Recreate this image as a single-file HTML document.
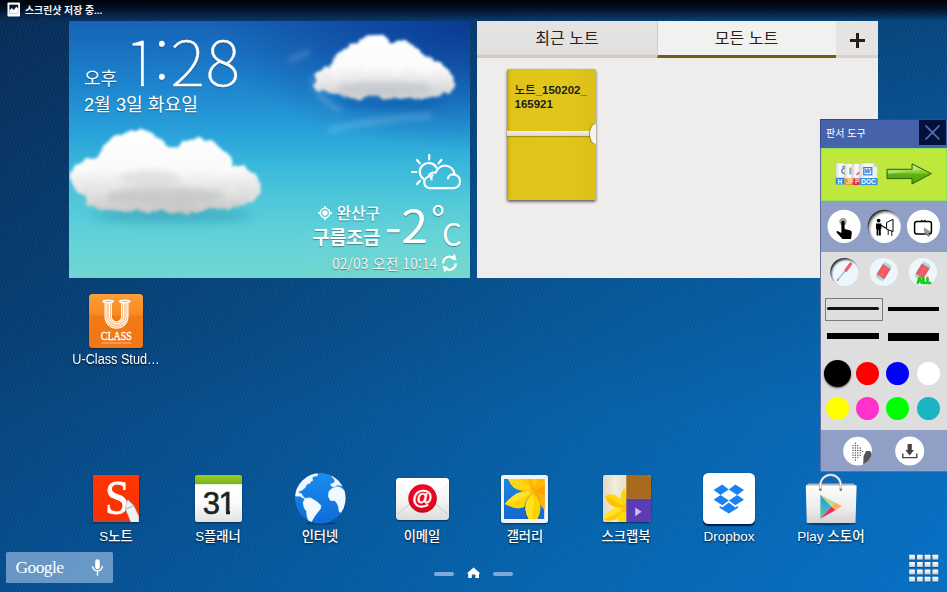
<!DOCTYPE html>
<html lang="ko"><head><meta charset="utf-8"><title>Home</title>
<style>
html,body{margin:0;padding:0;}
body{width:947px;height:592px;overflow:hidden;position:relative;font-family:"Liberation Sans","Noto Sans CJK KR",sans-serif;background:#0a549a;}
.abs{position:absolute;}
#bg{left:0;top:0;width:947px;height:592px;background:
 linear-gradient(180deg,#00030a 0px,#020f22 8px,rgba(6,32,66,0.75) 15px,rgba(8,50,100,0) 21px),
 repeating-linear-gradient(105deg,rgba(255,255,255,0.028) 0px,rgba(255,255,255,0.028) 1.4px,rgba(0,0,0,0) 1.4px,rgba(0,0,0,0) 3.3px),
 linear-gradient(180deg,rgba(6,22,52,0.44) 0%,rgba(6,22,52,0.2) 30%,rgba(6,22,52,0) 70%),
 linear-gradient(180deg,rgba(0,130,240,0) 55%,rgba(0,130,240,0.16) 100%),
 linear-gradient(105deg,#063b70 0%,#054b87 30%,#055da1 62%,#056bbc 100%);}
#status{left:0;top:0;width:947px;height:20px;color:#fff;font-size:10px;font-weight:bold;}
.lbl{position:absolute;color:#fff;font-size:13.3px;line-height:18px;text-align:center;white-space:nowrap;text-shadow:0 1px 2px rgba(0,0,0,0.8);}
.wt{color:#fff;white-space:nowrap;text-shadow:0 1px 1px rgba(0,0,0,0.35);}
.tab{top:0;height:34px;line-height:36px;text-align:center;font-size:16px;color:#2e221c;white-space:nowrap;}
.dot{width:23.2px;height:23.2px;border-radius:50%;}
</style></head><body>
<div id="bg" class="abs"></div>
<div id="status" class="abs">
<svg class="abs" style="left:6.5px;top:1.8px" width="13.6" height="15" viewBox="0 0 14 14" preserveAspectRatio="none"><rect x="0.5" y="0.5" width="13" height="13" rx="1" fill="#fff"/><rect x="2.5" y="2.5" width="9" height="8" fill="#0a1a33"/><path d="M2.5 10.5 L2.5 8 L5 5.5 L7 7.5 L9.5 4.5 L11.5 6 L11.5 10.5 Z" fill="#fff"/></svg>
<div class="abs" style="left:25px;top:4.2px;font-size:9.9px;line-height:13px;font-weight:bold;color:#f4f4f6;white-space:nowrap;font-family:'Liberation Sans','Noto Sans CJK KR',sans-serif;">스크린샷 저장 중...</div>
</div>
<!--STATUS-->
<div id="weather" class="abs" style="left:69px;top:21px;width:401px;height:257px;overflow:hidden;background:
 radial-gradient(ellipse 260px 130px at 100% 0%,rgba(8,50,140,0.85) 0%,rgba(8,50,140,0) 100%),
 radial-gradient(ellipse 200px 90px at 100% 100%,rgba(130,220,200,0.35) 0%,rgba(130,220,200,0) 100%),linear-gradient(180deg,#1762b6 0%,#1c80cc 22%,#279fd9 42%,#38b8db 56%,#4fc8d9 70%,#63d2da 85%,#70d6d1 100%);">
<svg class="abs" style="left:0;top:0" width="400" height="256" viewBox="69 21 400 256">
<defs>
<filter id="cb" filterUnits="userSpaceOnUse" x="40" y="0" width="460" height="300"><feGaussianBlur stdDeviation="3"/></filter>
<filter id="cf" filterUnits="userSpaceOnUse" x="40" y="0" width="460" height="300"><feTurbulence type="fractalNoise" baseFrequency="0.09" numOctaves="2" seed="4" result="n"/><feDisplacementMap in="SourceGraphic" in2="n" scale="9" xChannelSelector="R" yChannelSelector="G"/><feGaussianBlur stdDeviation="1.3"/></filter>
<filter id="cb2" filterUnits="userSpaceOnUse" x="40" y="0" width="460" height="300"><feGaussianBlur stdDeviation="6"/></filter>
<linearGradient id="cg1" gradientUnits="userSpaceOnUse" x1="0" y1="128" x2="0" y2="212"><stop offset="0" stop-color="#fff"/><stop offset="0.5" stop-color="#fafafa"/><stop offset="0.8" stop-color="#dedede"/><stop offset="1" stop-color="#c4c4c4"/></linearGradient>
<linearGradient id="cg2" gradientUnits="userSpaceOnUse" x1="0" y1="36" x2="0" y2="100"><stop offset="0" stop-color="#fff"/><stop offset="0.5" stop-color="#fafafa"/><stop offset="0.8" stop-color="#e0e0e0"/><stop offset="1" stop-color="#c4c8cc"/></linearGradient>
</defs>
<!-- cloud shadow -->
<ellipse cx="172" cy="215" rx="80" ry="6" fill="rgba(20,110,150,0.4)" filter="url(#cb2)"/>
<ellipse cx="388" cy="103" rx="58" ry="5" fill="rgba(10,60,150,0.45)" filter="url(#cb2)"/>
<!-- cloud 1 -->
<g filter="url(#cf)" fill="url(#cg1)" transform="translate(165 171) scale(1.05 1.05) translate(-165 -172)">
<path d="M74 176 Q80 162 103 158 Q109 138 134 133 Q156 130 165 147 Q172 151 180 147 Q193 136 210 143 Q225 151 227 165 Q247 169 256 184 Q258 196 244 202 Q236 210 214 208 Q190 214 160 210 Q130 212 108 208 Q92 206 88 196 Q76 190 74 176 Z"/>
</g>
<g filter="url(#cb)"><ellipse cx="165" cy="196" rx="60" ry="9" fill="#b8bcc0" opacity="0.55"/><ellipse cx="150" cy="178" rx="30" ry="8" fill="#d0d2d4" opacity="0.5"/></g>
<!-- cloud 2 -->
<g filter="url(#cf)" fill="url(#cg2)" transform="translate(383 68) scale(1.05 1.05) translate(-383 -68.5)">
<path d="M317 82 Q318 70 332 68 Q336 52 352 50 Q358 38 374 38 Q386 38 390 44 Q400 40 410 46 Q420 52 422 58 Q436 58 442 68 Q452 72 450 84 Q448 94 436 94 Q424 100 404 96 Q390 100 372 96 Q350 100 336 94 Q320 94 317 82 Z"/>
</g>
<g filter="url(#cb)"><ellipse cx="385" cy="88" rx="50" ry="7" fill="#b4bac2" opacity="0.55"/></g>
<!-- wisps -->
<g filter="url(#cb)" fill="none" stroke="rgba(255,255,255,0.25)" stroke-width="4" stroke-linecap="round">
<path d="M312 78 Q318 100 340 110"/>
<path d="M330 130 Q380 118 430 116"/>
<path d="M290 60 Q300 56 308 52"/>
</g>
</svg>
<div class="abs wt" style="left:15px;top:46px;font-size:18px;line-height:24px;">오후</div>
<div class="abs wt" id="clock" style="left:50px;top:-0.5px;font-size:62.5px;line-height:76px;font-family:'Noto Sans CJK KR','Liberation Sans',sans-serif;font-weight:100;letter-spacing:1px;transform:scaleX(1.05);transform-origin:0 0;-webkit-text-stroke:0.4px #fff;"><span style="position:relative;left:4.8px">1</span>:28</div>
<div class="abs" style="left:58.5px;top:61.4px;width:13.3px;height:5.4px;background: radial-gradient(ellipse 260px 130px at 100% 0%,rgba(8,50,140,0.85) 0%,rgba(8,50,140,0) 100%), radial-gradient(ellipse 200px 90px at 100% 100%,rgba(130,220,200,0.35) 0%,rgba(130,220,200,0) 100%),linear-gradient(180deg,#1762b6 0%,#1c80cc 22%,#279fd9 42%,#38b8db 56%,#4fc8d9 70%,#63d2da 85%,#70d6d1 100%);background-size:401px 257px;background-position:-58.5px -61.4px;background-repeat:no-repeat;"></div><div class="abs" style="left:74.8px;top:61.4px;width:11.5px;height:5.4px;background: radial-gradient(ellipse 260px 130px at 100% 0%,rgba(8,50,140,0.85) 0%,rgba(8,50,140,0) 100%), radial-gradient(ellipse 200px 90px at 100% 100%,rgba(130,220,200,0.35) 0%,rgba(130,220,200,0) 100%),linear-gradient(180deg,#1762b6 0%,#1c80cc 22%,#279fd9 42%,#38b8db 56%,#4fc8d9 70%,#63d2da 85%,#70d6d1 100%);background-size:401px 257px;background-position:-74.8px -61.4px;background-repeat:no-repeat;"></div>
<div class="abs wt" style="left:15px;top:72px;font-size:18.2px;line-height:24px;">2월 3일 화요일</div>
<svg class="abs" style="left:341px;top:132px" width="52" height="38" viewBox="410 153 52 38" fill="none" stroke="#fff" stroke-width="2.2" stroke-linecap="round" stroke-linejoin="round">
<path d="M429.2 155 V159.4 M417 160 L419.8 163.4 M441.4 160 L438.6 163.4 M412 172 H416.4 M417 184 L420 180.8"/>
<path d="M424.6 179.6 A8.8 8.8 0 1 1 436.4 167.6"/>
<path d="M430 188.2 H453.6 A6.8 6.8 0 0 0 454.8 174.8 A9.8 9.8 0 0 0 435.6 172.8 A5.4 5.4 0 0 0 428.6 176.8 A5.8 5.8 0 0 0 430 188.2 Z"/>
<path d="M448 178.4 A4.8 4.8 0 0 1 454.8 174.8"/>
<path d="M431.6 179.4 A3 3 0 0 1 432.6 175.4"/>
</svg>
<svg class="abs" style="left:248.2px;top:183.7px" width="16" height="16" viewBox="0 0 16 16" fill="none" stroke="#fff" stroke-width="1.5"><circle cx="8" cy="8" r="4.7"/><circle cx="8" cy="8" r="2.7" fill="#fff" stroke="none"/><path d="M8 1.2V3.4 M8 12.6V14.8 M1.2 8H3.4 M12.6 8H14.8" stroke-width="1.8"/></svg>
<div class="abs wt" style="left:267.5px;top:182.3px;font-size:15.8px;line-height:22px;font-weight:500;">완산구</div>
<div class="abs wt" style="left:243.5px;top:205px;font-size:18.4px;line-height:24px;font-weight:700;">구름조금</div>
<div class="abs wt" id="temp" style="left:316.4px;top:173.4px;font-size:45.6px;line-height:58px;font-family:'Noto Sans CJK KR','Liberation Sans',sans-serif;font-weight:400;letter-spacing:-0.5px;transform:scaleX(1.06);transform-origin:0 0;"><span style="position:relative;top:4.6px">-</span>2</div>
<div class="abs wt" id="deg" style="left:362px;top:175.2px;font-size:38px;line-height:44px;font-family:'Noto Sans CJK KR','Liberation Sans',sans-serif;font-weight:400;">°</div>
<div class="abs wt" style="left:373px;top:194.2px;font-size:31px;line-height:36px;font-family:'Noto Sans CJK KR','Liberation Sans',sans-serif;font-weight:400;">C</div>
<div class="abs wt" style="left:263px;top:232px;font-size:14px;line-height:20px;font-weight:400;font-family:'Noto Sans CJK KR','Liberation Sans',sans-serif;color:#f0f4f4;">02/03 오전 10:14</div>
<svg class="abs" style="left:371px;top:230px" width="20" height="24" viewBox="440 251 20 24" fill="none" stroke="#fff" stroke-width="2.2"><path d="M443.2 263.4 A6.3 6.3 0 0 1 454 258.6"/><path d="M455.7 263.2 A6.3 6.3 0 0 1 444.9 267.8"/><path d="M454.6 253.6 L456.6 260.2 L451 259.2 Z" fill="#fff" stroke="none"/><path d="M442.6 265.8 L448 267.2 L444.4 272.6 Z" fill="#fff" stroke="none"/></svg>
</div>
<!--WEATHER-->
<div id="note" class="abs" style="left:477px;top:21px;width:401px;height:257px;background:#efedeb;overflow:hidden;">
<div class="abs" style="left:0;top:0;width:180px;height:34px;background:linear-gradient(180deg,#e6e4e2,#e2e0de);border-bottom:3px solid #cfccc6;box-shadow:inset 0 -1px 0 #dad7d2;"></div>
<div class="abs" style="left:180px;top:0;width:179px;height:34px;background:#f1f1f0;border-bottom:3px solid #7a5a16;border-left:1px solid #cfcdca;box-sizing:content-box;width:178px;"></div>
<div class="abs" style="left:359px;top:0;width:42px;height:34px;background:#e6e4e2;border-bottom:3px solid #d6d3ce;"></div>
<div class="abs tab" style="left:0;width:180px;">최근 노트</div>
<div class="abs tab" style="left:180px;width:179px;">모든 노트</div>
<div class="abs" style="left:373px;top:18px;width:15px;height:2.6px;background:#2a1c14;"></div>
<div class="abs" style="left:379.2px;top:12px;width:2.6px;height:15px;background:#2a1c14;"></div>
<div class="abs" style="left:30px;top:47.5px;width:88.5px;height:131px;border-radius:2px;background:linear-gradient(90deg,#b99e10 0px,#d8bc16 2px,#e0c41a 5px,#e2c61c 60%,#dcc018 100%);box-shadow:0 2px 3px rgba(0,0,0,0.55),0 0 1px rgba(0,0,0,0.4);">
 <div class="abs" style="left:0;top:62.5px;width:100%;height:4.5px;background:linear-gradient(180deg,#f4f2ec,#d9d6cc);box-shadow:0 1px 1px rgba(120,100,0,0.5);"></div>
 <div class="abs" style="right:0;top:55px;width:5.5px;height:20px;background:#f4f3f0;border-radius:100% 0 0 100%/50% 0 0 50%;box-shadow:-1px 0 1px rgba(90,70,0,0.5);"></div>
 <div class="abs" style="left:7.5px;top:14px;font-size:11.5px;line-height:14.6px;font-weight:bold;color:#1c1c1c;white-space:nowrap;"><span style="font-weight:500">노트</span>_150202_<br>165921</div>
</div>
</div>
<!--NOTE-->
<div id="panel" class="abs" style="left:820px;top:119px;width:127px;height:353px;background:#dedede;overflow:hidden;box-shadow:inset 1px 0 0 #5f6f9e;">
<div class="abs" style="left:0;top:0;width:127px;height:29px;background:#4662ab;box-shadow:inset 1px 0 0 #35488a,inset 0 1px 0 #35488a;"></div>
<div class="abs" style="left:6px;top:8px;font-size:10px;line-height:14px;color:#fff;white-space:nowrap;font-weight:400;">판서 도구</div>
<div class="abs" style="left:99px;top:1px;width:27px;height:25px;background:#03123a;"></div>
<svg class="abs" style="left:99px;top:1px" width="27" height="25" viewBox="0 0 27 25"><path d="M6.5 5.5 L20.5 19.5 M20.5 5.5 L6.5 19.5" stroke="#5a76bd" stroke-width="1.6" fill="none"/></svg>
<div class="abs" style="left:1px;top:29px;width:126px;height:53px;background:#bee83c;box-sizing:border-box;border:1px solid #8fe25c;"></div>
<div class="abs" style="left:1px;top:82px;width:126px;height:51px;background:#8f9fc6;"></div>
<div class="abs" style="left:1px;top:311px;width:126px;height:41px;background:#8f9fc6;"></div>
<div class="abs" style="left:0;top:352px;width:127px;height:1px;background:#5f6f9e;"></div>
<svg class="abs" style="left:0;top:0" width="127" height="353" viewBox="820 119 127 353">
<defs>
<linearGradient id="pg" x1="0" y1="0" x2="1" y2="0"><stop offset="0" stop-color="#d8d8d8"/><stop offset="0.35" stop-color="#fafafa"/><stop offset="1" stop-color="#ececec"/></linearGradient>
<linearGradient id="ag" x1="0" y1="0" x2="0" y2="1"><stop offset="0" stop-color="#b4e860"/><stop offset="0.45" stop-color="#86cf2c"/><stop offset="0.5" stop-color="#62b414"/><stop offset="1" stop-color="#4c9c0c"/></linearGradient>
<radialGradient id="press" cx="0.56" cy="0.58" r="0.56"><stop offset="0.78" stop-color="#fff"/><stop offset="0.9" stop-color="#b8b8b8"/><stop offset="1" stop-color="#3a3a3a"/></radialGradient>
<filter id="als" x="-20%" y="-20%" width="150%" height="150%"><feDropShadow dx="0.7" dy="0.6" stdDeviation="0.1" flood-color="#0a5a0a" flood-opacity="1"/></filter>
<radialGradient id="press2" cx="0.56" cy="0.58" r="0.56"><stop offset="0.8" stop-color="#edf7fb"/><stop offset="0.9" stop-color="#a8b0b4"/><stop offset="1" stop-color="#30363a"/></radialGradient>
</defs>
<!-- files -->
<g>
<rect x="835.8" y="163" width="11" height="21.5" fill="url(#pg)" stroke="#b8c4a0" stroke-width="0.4"/>
<rect x="835.8" y="177.8" width="11" height="6.7" fill="#2d8ad8"/>
<path d="M842 167 q3 -1 3 1 q-4 1 -3 4 q1 2 3 1" stroke="#2a6fc0" stroke-width="1.2" fill="none"/>
<rect x="844.8" y="163.5" width="10" height="21.5" fill="url(#pg)" stroke="#b8b8a0" stroke-width="0.4"/>
<rect x="844.8" y="178.4" width="10" height="6.6" fill="#f09a1c"/>
<rect x="849.3" y="168.5" width="2.2" height="6" fill="#58b8e8"/><rect x="849.3" y="167.5" width="2.2" height="1.6" fill="#f0a020"/>
<rect x="852.6" y="163.5" width="9" height="21.5" fill="url(#pg)" stroke="#b8b8a0" stroke-width="0.4"/>
<rect x="852.6" y="178.4" width="9" height="6.6" fill="#e0283a"/>
<path d="M856.5 175 L859.5 172" stroke="#e04050" stroke-width="1.2"/>
<path d="M859.6 163 H873.6 L877.6 167 V185 H859.6 Z" fill="url(#pg)" stroke="#b0b8a0" stroke-width="0.4"/>
<path d="M873.6 163 V167 H877.6 Z" fill="#d0d0d0"/>
<rect x="859.6" y="178" width="18" height="7" fill="#3a8fe0"/>
<rect x="863.2" y="167" width="9.2" height="8.4" fill="#2f7fd0"/><rect x="864.4" y="168.2" width="6.8" height="6" fill="#e8f2fc"/>
</g>
<text x="864.6" y="172.9" font-family="Liberation Sans, sans-serif" font-size="5.5" font-weight="bold" font-style="italic" fill="#1e60b8" textLength="6" lengthAdjust="spacingAndGlyphs">W</text>
<text x="837.6" y="183.8" font-family="Liberation Sans, sans-serif" font-size="6.5" font-weight="bold" fill="#fff">H</text>
<text x="846.2" y="184.3" font-family="Liberation Sans, sans-serif" font-size="6.5" font-weight="bold" fill="#ffe0a0">JF</text>
<text x="855" y="184.3" font-family="Liberation Sans, sans-serif" font-size="6.5" font-weight="bold" fill="#ffd0d0">P</text>
<text x="861.2" y="184" font-family="Liberation Sans, sans-serif" font-size="6.8" font-weight="bold" fill="#fff" textLength="14.5" lengthAdjust="spacingAndGlyphs">DOC</text>
<!-- arrow -->
<path d="M887 169.3 H912 V163.8 L931.4 173.7 L912 184 V178.6 H887 Z" fill="url(#ag)" stroke="#2a6608" stroke-width="1" stroke-linejoin="miter"/>
<path d="M888 170.3 H913 V165.5 L922 170 Q905 171 888 174 Z" fill="rgba(255,255,255,0.3)"/>
<!-- band circles -->
<circle cx="844.1" cy="226.3" r="16.6" fill="#fff"/>
<circle cx="884.2" cy="226.3" r="16.6" fill="url(#press)"/>
<circle cx="923.5" cy="226.3" r="16.6" fill="#fff"/>
<!-- hand -->
<circle cx="843" cy="221.6" r="3.6" fill="#9a9a9a"/><circle cx="843" cy="221.6" r="2.2" fill="#c8c8c8"/>
<path d="M841.4 222 a1.6 1.6 0 0 1 3.2 0 V229 L850.5 230.5 Q852 231 851.8 233 L851 239 H842.5 L836.6 232.5 Q836 231 837.5 231 L841.4 233 Z" fill="#000"/>
<!-- presenter -->
<circle cx="878.6" cy="220.6" r="1.9" fill="#000"/>
<path d="M876 223.4 H881.4 V229 H880.8 V235.6 H879 V230 H878.4 V235.6 H876.6 V229 H876 Z" fill="#000"/>
<path d="M880.5 225 L886 228.2" stroke="#000" stroke-width="1.2"/>
<path d="M886.6 222.5 L893 219.4 V231.5 L886.6 229.2 Z" fill="#fff" stroke="#000" stroke-width="1"/>
<path d="M888.2 230 V235 M891.8 231 V236" stroke="#000" stroke-width="0.9"/>
<!-- board with cursor -->
<rect x="914.6" y="221.6" width="16.8" height="12.4" rx="2.2" fill="#fff" stroke="#000" stroke-width="1.5"/>
<path d="M921 219.6 V222 H925.4 V219.6 L923.2 221 Z" fill="#000"/>
<path d="M924.4 228 L930.2 232 L928.2 232.8 L929.6 236 L928 236.6 L926.6 233.6 L925 235 Z" fill="#9a9a9a" stroke="#666" stroke-width="0.5"/>
<!-- pen/eraser circles -->
<circle cx="844.4" cy="272" r="14.1" fill="url(#press2)"/>
<circle cx="883.7" cy="272" r="14.1" fill="#edf7fb"/>
<circle cx="922.9" cy="272" r="14.1" fill="#edf7fb"/>
<path d="M838 279.6 L846.4 269.4" stroke="#7cc8c8" stroke-width="1.3"/>
<path d="M846 270.2 L850.6 264" stroke="#ee6068" stroke-width="3.2" stroke-linecap="round"/>
<path d="M837.2 280.8 L838.6 279" stroke="#ee6068" stroke-width="1.4"/>
<g transform="translate(883.6 271.6) rotate(-58)"><rect x="-9" y="-4.6" width="18" height="9.2" rx="1.6" fill="#a8dede"/><rect x="-6" y="-4.6" width="12" height="9.2" fill="#ee5a64"/><rect x="-6" y="-1" width="12" height="2.4" fill="#f0707a" opacity="0.6"/></g>
<g transform="translate(922.6 271) rotate(-58)"><rect x="-9" y="-4.6" width="18" height="9.2" rx="1.6" fill="#a8dede"/><rect x="-6" y="-4.6" width="12" height="9.2" fill="#ee5a64"/><rect x="-6" y="-1" width="12" height="2.4" fill="#f0707a" opacity="0.6"/></g>
<text x="916.5" y="283" font-family="Liberation Sans, sans-serif" font-size="9.6" font-weight="bold" fill="#00e000" stroke="#00e000" stroke-width="0.5" textLength="14" lengthAdjust="spacingAndGlyphs" filter="url(#als)">ALL</text>
<!-- bottom circles -->
<circle cx="857.6" cy="451.1" r="14.4" fill="#fff"/>
<circle cx="909.7" cy="451.1" r="14.5" fill="#fff"/>
<clipPath id="c1"><circle cx="857.6" cy="451.1" r="14.4"/></clipPath>
<g clip-path="url(#c1)"><path d="M863 468 L863.6 456 L866.2 451 H870.4 L872.5 455 V468 Z" fill="#555"/></g>
<g fill="#333">
<circle cx="855.4" cy="443.2" r="0.65"/>
<circle cx="853" cy="445.6" r="0.65"/><circle cx="855.4" cy="445.6" r="0.65"/><circle cx="857.8" cy="445.6" r="0.65"/>
<circle cx="853" cy="448" r="0.65"/><circle cx="855.4" cy="448" r="0.65"/><circle cx="857.8" cy="448" r="0.65"/><circle cx="860.2" cy="448" r="0.65"/>
<circle cx="853" cy="450.4" r="0.65"/><circle cx="855.4" cy="450.4" r="0.65"/><circle cx="857.8" cy="450.4" r="0.65"/><circle cx="860.2" cy="450.4" r="0.65"/><circle cx="862.6" cy="451.4" r="0.65"/>
<circle cx="853" cy="452.8" r="0.65"/><circle cx="855.4" cy="452.8" r="0.65"/><circle cx="857.8" cy="452.8" r="0.65"/><circle cx="860.2" cy="452.8" r="0.65"/>
<circle cx="853" cy="455.2" r="0.65"/><circle cx="855.4" cy="455.2" r="0.65"/><circle cx="857.8" cy="455.2" r="0.65"/><circle cx="860.2" cy="455.2" r="0.65"/>
<circle cx="853" cy="457.6" r="0.65"/><circle cx="855.4" cy="457.6" r="0.65"/><circle cx="857.8" cy="457.6" r="0.65"/>
<circle cx="855.4" cy="460" r="0.65"/>
</g>
<path d="M907.6 444 H911.8 V450 H914 L909.7 455.6 L905.4 450 H907.6 Z" fill="#444"/>
<path d="M902.8 453.4 V457.6 H916.8 V453.4" fill="none" stroke="#444" stroke-width="1.4"/>
</svg>
<div class="abs" style="left:5px;top:179px;width:56px;height:21px;border:1px solid #7a7a7a;box-sizing:content-box;"></div>
<div class="abs" style="left:7px;top:188px;width:52px;height:3px;background:#111;border-radius:1.5px;"></div>
<div class="abs" style="left:67.5px;top:187.6px;width:51.5px;height:4.2px;background:#000;"></div>
<div class="abs" style="left:7px;top:214px;width:52px;height:6px;background:#000;"></div>
<div class="abs" style="left:67.5px;top:213.8px;width:51.5px;height:8.2px;background:#000;"></div>
<div class="abs dot" style="left:3.7px;top:241px;width:27.4px;height:27.4px;background:#000;box-shadow:0 1px 2px rgba(0,0,0,0.6);"></div>
<div class="abs dot" style="left:36.1px;top:243.1px;background:#ff0000;"></div>
<div class="abs dot" style="left:66.2px;top:243.1px;background:#0000fe;"></div>
<div class="abs dot" style="left:96.5px;top:243.1px;background:#ffffff;"></div>
<div class="abs dot" style="left:5.8px;top:277.6px;background:#ffff00;"></div>
<div class="abs dot" style="left:36.1px;top:277.6px;background:#ff33cc;"></div>
<div class="abs dot" style="left:66.2px;top:277.6px;background:#00ff00;"></div>
<div class="abs dot" style="left:96.5px;top:277.6px;background:#1ab4c4;"></div>
</div>
<!--PANEL-->
<!-- U-Class -->
<div class="abs" style="left:89px;top:294px;width:54.3px;height:54px;border-radius:3.5px;background:linear-gradient(180deg,#f9a03a 0%,#f68a20 38%,#f07a14 42%,#f07818 100%);box-shadow:0 1px 2px rgba(0,0,0,0.5);overflow:hidden;">
<svg class="abs" style="left:0;top:0" width="54" height="54" viewBox="89 294 54 54">
<g fill="none" stroke="#fff">
<path d="M108.2 302.5 V316.8 A8.3 8.3 0 0 0 124.8 316.8 V302.5" stroke-width="7.4"/>
<path d="M108.2 302.5 V316.8 A8.3 8.3 0 0 0 124.8 316.8 V302.5" stroke="#f6a050" stroke-width="5"/>
<path d="M108.2 302.5 V316.8 A8.3 8.3 0 0 0 124.8 316.8 V302.5" stroke-width="3.8"/>
<path d="M108.2 302.5 V316.8 A8.3 8.3 0 0 0 124.8 316.8 V302.5" stroke="#f6a050" stroke-width="1.6"/>
<path d="M108.2 302.5 V316.8 A8.3 8.3 0 0 0 124.8 316.8 V302.5" stroke-width="0.7"/>
</g>
<ellipse cx="108.2" cy="301.4" rx="5.8" ry="1.9" fill="#fff"/><ellipse cx="124.8" cy="301.4" rx="5.8" ry="1.9" fill="#fff"/>
<ellipse cx="108.2" cy="301.4" rx="3.2" ry="0.7" fill="#f8b070"/><ellipse cx="124.8" cy="301.4" rx="3.2" ry="0.7" fill="#f8b070"/>
<text x="116.3" y="340.4" text-anchor="middle" font-family="Liberation Serif, serif" font-size="12" fill="#fff" stroke="#fff" stroke-width="0.35" textLength="31" lengthAdjust="spacingAndGlyphs">CLASS</text>
<rect x="101.5" y="342.4" width="29.5" height="1.2" fill="rgba(255,255,255,0.4)"/>
</svg></div>
<div class="lbl" style="left:56px;top:350px;width:120px;font-size:14px;line-height:18px;transform:scaleX(0.905);">U-Class Stud…</div>
<!-- S Note -->
<div class="abs" style="left:93.3px;top:474.5px;width:46px;height:47.5px;background:linear-gradient(180deg,#ff3604 0%,#fa3002 94%,#c8442c 97%,#c8442c 100%);box-shadow:0 1px 2px rgba(0,0,0,0.45);overflow:hidden;">
<div class="abs" style="left:11.3px;top:-4.9px;font-family:'Liberation Serif',serif;font-size:48.6px;line-height:56px;color:#fff;-webkit-text-stroke:0.9px #fff;transform:scaleX(0.9);transform-origin:0 0;">S</div>
<svg class="abs" style="left:0;top:0" width="46" height="47.5" viewBox="0 0 46 47.5"><path d="M34.4 24.2 L40.8 30.6 L46 41.6 V47.5 H38 L32.4 34 Z" fill="#f0f0f0" stroke="#a8a8a8" stroke-width="0.6"/><path d="M32.6 34 L40.6 30.8" stroke="#909090" stroke-width="0.7"/><path d="M34.4 24.2 L36.4 26.2 L33.8 27.6 Z" fill="#c8d0e0"/><circle cx="34.5" cy="24.6" r="0.8" fill="#3a7ad8"/></svg>
</div>
<div class="lbl" style="left:66px;top:527.8px;width:100px;font-weight:500;">S노트</div>
<!-- S Planner -->
<div class="abs" style="left:195px;top:474.5px;width:47px;height:47.5px;border-radius:2px;background:linear-gradient(180deg,#9ccc2c 0px,#7eb414 8.6px,#6a9c0c 9px,#ffffff 9.6px,#fbfbfb 60%,#e2e2e2 100%);box-shadow:0 1px 2px rgba(0,0,0,0.5);overflow:hidden;">
<div class="abs" style="left:0;top:12px;width:47px;text-align:center;font-size:31px;line-height:34px;color:#16261a;letter-spacing:-1.6px;-webkit-text-stroke:0.6px #16261a;">31</div>
<div class="abs" style="left:24.4px;top:36px;width:6.5px;height:4.4px;background:linear-gradient(180deg,#f1f1f1,#ececec);"></div><div class="abs" style="left:34.9px;top:36px;width:5.6px;height:4.4px;background:linear-gradient(180deg,#f1f1f1,#ececec);"></div>
</div>
<div class="lbl" style="left:168px;top:527.8px;width:100px;font-weight:500;">S플래너</div>
<!-- Internet -->
<svg class="abs" style="left:294px;top:472px" width="54" height="54" viewBox="294 472 54 54">
<defs><linearGradient id="gl" x1="0" y1="0" x2="0" y2="1"><stop offset="0" stop-color="#1a8cee"/><stop offset="1" stop-color="#0e6cd8"/></linearGradient><clipPath id="gc"><circle cx="320.3" cy="498.3" r="25.3"/></clipPath></defs>
<ellipse cx="321" cy="523.4" rx="16" ry="1.6" fill="rgba(0,0,0,0.25)"/>
<circle cx="320.3" cy="498.3" r="25.3" fill="url(#gl)"/>
<g clip-path="url(#gc)" fill="#f2f8ff" stroke="#f2f8ff" stroke-width="0.8" stroke-linejoin="round">
<path d="M314.3 473.6 L317.9 474.1 L317.4 475.6 L313.8 476.3 L311.8 478.1 L312.8 480.2 L310.3 481.7 L309.8 483.2 L306.7 484.2 L305.2 487.3 L303.2 489.3 L301.1 490.5 L298.9 491.1 L298.6 493.3 L301.1 493.5 L302.4 495.6 L304.2 498.2 L305.2 498.4 L302.2 497.6 L300.1 496.0 L296.1 496.0 L293.0 495.4 L293.0 483.2 L300.1 474.1 L310.3 471.0 Z"/>
<path d="M305.2 498.4 L310.3 497.9 L316.4 501.4 L320.9 505.5 L320.4 508.5 L317.4 512.6 L314.3 516.6 L311.5 521.4 L308.7 520.7 L307.2 516.6 L306.7 511.6 L304.2 507.5 L303.2 502.5 Z"/>
<path d="M329.0 491.3 L332.6 488.3 L337.6 486.7 L340.7 487.8 L342.9 489.5 L347.8 493.3 L347.8 508.5 L341.9 512.8 L339.2 511.6 L338.6 506.5 L336.6 502.5 L334.6 500.4 L330.5 500.4 L328.5 496.4 Z"/>
<path d="M330.7 484.2 L333.6 483.2 L335.1 481.2 L333.8 478.1 L331.8 476.6 L334.6 474.1 L342.7 480.2 L344.7 486.2 L340.7 485.4 L337.6 484.7 L334.6 486.7 L331.6 486.2 Z"/>
</g>
</svg>
<div class="lbl" style="left:270px;top:527.8px;width:100px;font-weight:500;">인터넷</div>
<!-- Email -->
<div class="abs" style="left:396px;top:478px;width:53.2px;height:42px;border-radius:3.5px;background:linear-gradient(180deg,#ffffff 0%,#f4f4f4 55%,#dcdcdc 100%);box-shadow:0 1px 2px rgba(0,0,0,0.5);overflow:hidden;">
<svg class="abs" style="left:0;top:0" width="53.2" height="42" viewBox="0 0 53.2 42"><defs><radialGradient id="rc" cx="0.5" cy="0.4" r="0.6"><stop offset="0" stop-color="#f20a26"/><stop offset="0.8" stop-color="#e4061e"/><stop offset="1" stop-color="#c40418"/></radialGradient></defs><path d="M1 5 L13 16.5 M52.2 5 L40.2 16.5 M1.5 36.5 L13.5 26 M51.7 36.5 L39.7 26" stroke="#c4c4c4" stroke-width="0.9" fill="none"/><path d="M0 0 H53.2 V5 L40 17 H13 L0 5 Z" fill="#fff" opacity="0.7"/><circle cx="26.6" cy="20.5" r="14.3" fill="url(#rc)"/></svg>
<div class="abs" style="left:11.6px;top:5.4px;width:30px;text-align:center;font-size:20.5px;line-height:28px;font-weight:bold;color:#fff;-webkit-text-stroke:0.4px #fff;">@</div>
</div>
<div class="lbl" style="left:372px;top:527.8px;width:100px;font-weight:500;">이메일</div>
<!-- Gallery -->
<div class="abs" style="left:500.6px;top:474.8px;width:47.6px;height:47.8px;border-radius:2.5px;background:#f3f3f3;box-shadow:0 1px 2px rgba(0,0,0,0.5);overflow:hidden;">
<svg class="abs" style="left:3.8px;top:3.8px" width="40.2" height="40" viewBox="0 0 40.8 40.8" preserveAspectRatio="none">
<defs><linearGradient id="gb" x1="0" y1="0" x2="0" y2="1"><stop offset="0" stop-color="#1c86e0"/><stop offset="1" stop-color="#1668cc"/></linearGradient></defs>
<rect width="40.8" height="40.8" fill="url(#gb)"/>

<g transform="translate(30.4 12.6)">
<path d="M0 0 Q-13 1 -20 -3.4 Q-25 -8 -26.5 -14 L-7 -14 Q-3 -8 0 0 Z" fill="#ffc808"/>
<path d="M0 0 Q-9 -3 -20 -3.4 Q-25 -8 -26.5 -14 L-16 -14 Q-6 -6 0 0 Z" fill="#ffd614"/>
<path d="M0 0 Q-3 -8 -7 -14 L11 -14 L11 3 Z" fill="#ffb804"/>
<path d="M0 0 Q-1 -8 -1.5 -14 L4 -14 Z" fill="#ffc810"/>
<path d="M0 0 L11 -6 L11 3 Z" fill="#ffa200"/>
<path d="M0 0 Q5 6 6.5 14 L11 19.5 L11 3 Z" fill="#ffb000"/>
<path d="M-1.2 -0.6 Q-19 -3 -30 13.4 Q-14 20.5 -7.6 13 Q-3.4 7.4 0.6 0.8 Z" fill="#0c50b0" opacity="0.55" transform="translate(0.6 1)"/>
<path d="M0 0 Q-18 -3 -29.6 13.2 Q-14 21.5 -7 13.5 Q-3 7 0 0 Z" fill="#ffd408"/>
<path d="M0 0 Q-18 -3 -29.6 13.2 Q-12 8 0 0 Z" fill="#ffe030"/>
<path d="M0 0 Q-10.6 10 -9 19 Q-8.4 24 -5 28.5 L3.6 28.5 Q8 20 6 12 Q4 5 0 0 Z" fill="#0c50b0" opacity="0.5" transform="translate(-0.8 0.4)"/>
<path d="M0 0 Q-10 10 -8.5 19 Q-8 24 -5 28.5 L3.6 28.5 Q8 20 6 12 Q4 5 0 0 Z" fill="#ffd200"/>
<path d="M0 0 Q-10 10 -8.5 19 Q-8 24 -5 28.5 L-1.5 28.5 Q0 14 0 0 Z" fill="#ffe21c"/>
<circle cx="0" cy="0" r="5" fill="#ffa400" opacity="0.45"/>
</g>
</svg></div>
<div class="lbl" style="left:475px;top:527.8px;width:100px;font-weight:500;">갤러리</div>
<!-- Scrapbook -->
<div class="abs" style="left:602.6px;top:474.5px;width:48px;height:47.5px;border-radius:2.5px;background:#ece4d0;box-shadow:0 1px 2px rgba(0,0,0,0.5);overflow:hidden;">
<svg class="abs" style="left:0;top:0" width="48" height="47.5" viewBox="0 0 48 47.5">
<defs><linearGradient id="sb" x1="0" y1="0" x2="1" y2="0"><stop offset="0" stop-color="#e2d8c2"/><stop offset="0.5" stop-color="#f2ecdc"/><stop offset="1" stop-color="#e8e0cc"/></linearGradient></defs>
<rect width="23.5" height="47.5" fill="url(#sb)"/>
<g transform="translate(22.8 33.2)">
<path d="M0 0 C-7 -6 -6 -15 -1.5 -20 Q1 -18 0.6 0 Z" fill="#ffd400"/>
<path d="M0 0 C-4 -12 -14 -16 -20.4 -12.4 C-20 -4 -10 2 0 0 Z" fill="#ffc400"/>
<path d="M0 0 C-4 -12 -14 -16 -20.4 -12.4 Q-10 -8 0 0 Z" fill="#ffdc10" opacity="0.85"/>
<path d="M0 0 C-10 -3 -19 2 -22.4 11.4 C-14 15 -5 10 0 0 Z" fill="#ffcc00"/>
<path d="M0 0 C-10 -3 -19 2 -22.4 11.4 Q-10 6 0 0 Z" fill="#ffe428"/>
<path d="M0 0 Q-8.6 6 -8 14.5 L0.6 14.5 Z" fill="#ffdc00"/>
<circle cx="-1" cy="0" r="4" fill="#ffa800" opacity="0.45"/>
</g>
<rect x="23.3" y="0" width="24.7" height="23.9" fill="#a86a1c"/>
<rect x="23.3" y="23.9" width="24.7" height="23.7" fill="#5c3cb2"/>
<path d="M32.2 32.4 L38.6 36.8 L32.2 41.2 Z" fill="#cdbdf2"/>
</svg></div>
<div class="lbl" style="left:576px;top:527.8px;width:100px;font-weight:500;">스크랩북</div>
<!-- Dropbox -->
<div class="abs" style="left:702.9px;top:472.7px;width:51.8px;height:51.4px;border-radius:5.5px;background:#fff;box-shadow:0 1.2px 1.2px rgba(0,0,40,0.75);">
<svg class="abs" style="left:0;top:0" width="51.6" height="51.3" viewBox="702.9 472.7 51.6 51.3"><g fill="#1a82f2">
<path d="M713.5 489.6 L722.1 484.2 L728.7 489.3 L720.4 494.6 Z"/><path d="M728.7 489.3 L735.3 484.2 L743.9 489.6 L737.1 494.6 Z"/><path d="M713.5 499.4 L720.4 494.6 L728.7 500.2 L722.1 504.9 Z"/><path d="M728.7 500.2 L737.1 494.6 L743.9 499.4 L735.3 504.9 Z"/><path d="M728.7 502.2 L722.1 507.1 L719.6 505.5 L719.6 507.8 L728.7 513.1 L737.8 507.8 L737.8 505.5 L735.3 507.1 Z"/>
</g></svg></div>
<div class="lbl" style="left:679px;top:527.5px;width:100px;font-size:13.5px;">Dropbox</div>
<!-- Play Store -->
<svg class="abs" style="left:800px;top:470px" width="62" height="56" viewBox="800 470 62 56">
<defs><linearGradient id="bag" x1="0" y1="0" x2="0" y2="1"><stop offset="0" stop-color="#fdfdfd"/><stop offset="0.6" stop-color="#ededed"/><stop offset="1" stop-color="#d4d4d4"/></linearGradient></defs>
<ellipse cx="831" cy="523.6" rx="25" ry="1.8" fill="rgba(0,10,40,0.45)"/>
<path d="M808.4 483.4 H853 L856.6 486 H805.8 Z" fill="#b4b4b4"/>
<path d="M805.8 485.6 H856.6 L855.5 523 H806.8 Z" fill="url(#bag)"/>
<path d="M820.4 490 V485 A10.2 10.2 0 0 1 840.8 485 V490" fill="none" stroke="#a8a8a8" stroke-width="2.4"/>
<path d="M820.4 489 V485 A10.2 10.2 0 0 1 840.8 485 V489" fill="none" stroke="#f4f4f4" stroke-width="1.3"/>
<rect x="819.3" y="488.4" width="2.2" height="2.6" rx="0.8" fill="#777"/><rect x="839.7" y="488.4" width="2.2" height="2.6" rx="0.8" fill="#777"/>
<defs><linearGradient id="pt" x1="0" y1="0" x2="0" y2="1"><stop offset="0" stop-color="#2a96d2"/><stop offset="1" stop-color="#5ccab0"/></linearGradient></defs>
<path d="M820.4 494.7 L831.4 506.4 L820.4 518.8 Z" fill="url(#pt)"/>
<path d="M820.4 494.7 L835.6 502.8 L831.4 506.4 Z" fill="#b4e094"/>
<path d="M820.4 518.8 L835.6 510 L831.4 506.4 Z" fill="#e8305c"/>
<path d="M835.6 502.8 L841.9 506.3 L835.6 510 L831.4 506.4 Z" fill="#ffac5c"/>
</svg>
<div class="lbl" style="left:781px;top:527.6px;width:100px;font-size:13.5px;font-weight:500;">Play 스토어</div>
<!--ICONS-->
<div class="abs" style="left:6.2px;top:551.8px;width:107px;height:31px;border-radius:1.5px;background:rgba(170,200,235,0.6);"></div>
<div class="abs" style="left:15.5px;top:556px;font-family:'Liberation Serif',serif;font-size:17.5px;line-height:22px;color:#fff;letter-spacing:-0.6px;">Google</div>
<svg class="abs" style="left:90px;top:558px" width="16" height="20" viewBox="90 558 16 20" fill="none" stroke="#fff" stroke-width="1.4"><rect x="95.2" y="559.2" width="4.6" height="10" rx="2.3" fill="#fff" stroke="none"/><path d="M92.6 566 A4.9 4.9 0 0 0 102.4 566"/><path d="M97.5 571 V575.6"/></svg>
<div class="abs" style="left:434px;top:571.8px;width:20px;height:3.8px;border-radius:2px;background:#7eaadb;"></div>
<div class="abs" style="left:493px;top:571.8px;width:20px;height:3.8px;border-radius:2px;background:#7eaadb;"></div>
<svg class="abs" style="left:466px;top:566px" width="16" height="14" viewBox="466 566 16 14"><path d="M473.6 567.4 L480.4 573.4 H479 V578 H475.4 V574.4 H471.8 V578 H468.2 V573.4 H466.8 Z" fill="#fff"/></svg>
<svg class="abs" style="left:906px;top:552px" width="36" height="34" viewBox="906 552 36 34">
<defs><linearGradient id="sq" x1="0" y1="0" x2="0" y2="1"><stop offset="0" stop-color="#ffffff"/><stop offset="1" stop-color="#cfcfcf"/></linearGradient>
<filter id="sqs" x="-30%" y="-30%" width="160%" height="160%"><feDropShadow dx="0" dy="0.6" stdDeviation="0.7" flood-color="#00204a" flood-opacity="0.7"/></filter></defs>
<g fill="url(#sq)" filter="url(#sqs)">
<rect x="909.2" y="554.8" width="5.7" height="4.8" rx="0.4"/><rect x="917.0" y="554.8" width="5.7" height="4.8" rx="0.4"/><rect x="924.7" y="554.8" width="5.7" height="4.8" rx="0.4"/><rect x="932.5" y="554.8" width="5.7" height="4.8" rx="0.4"/><rect x="909.2" y="562.1" width="5.7" height="4.8" rx="0.4"/><rect x="917.0" y="562.1" width="5.7" height="4.8" rx="0.4"/><rect x="924.7" y="562.1" width="5.7" height="4.8" rx="0.4"/><rect x="932.5" y="562.1" width="5.7" height="4.8" rx="0.4"/><rect x="909.2" y="569.5" width="5.7" height="4.8" rx="0.4"/><rect x="917.0" y="569.5" width="5.7" height="4.8" rx="0.4"/><rect x="924.7" y="569.5" width="5.7" height="4.8" rx="0.4"/><rect x="932.5" y="569.5" width="5.7" height="4.8" rx="0.4"/><rect x="909.2" y="576.8" width="5.7" height="4.8" rx="0.4"/><rect x="917.0" y="576.8" width="5.7" height="4.8" rx="0.4"/><rect x="924.7" y="576.8" width="5.7" height="4.8" rx="0.4"/><rect x="932.5" y="576.8" width="5.7" height="4.8" rx="0.4"/>
</g></svg>
<!--BOTTOM-->
</body></html>
